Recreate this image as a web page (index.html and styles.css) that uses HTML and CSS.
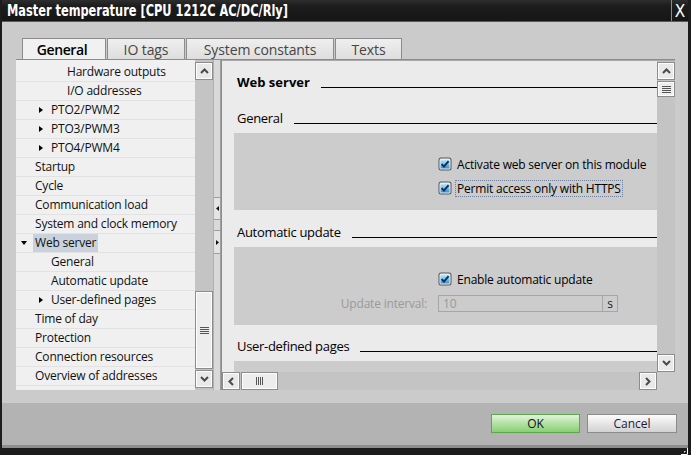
FILE: index.html
```html
<!DOCTYPE html>
<html>
<head>
<meta charset="utf-8">
<title>Master temperature</title>
<link rel="stylesheet" href="styles.css">
</head>
<body>
<div class="window">
  <div class="titlebar">
    <span class="title"><span class="title-text">Master temperature [CPU 1212C AC/DC/Rly]</span></span>
    <span class="close">X</span>
  </div>

  <div class="main">
    <div class="tabs">
      <div class="tab tab-general active">General</div>
      <div class="tab tab-io">IO tags</div>
      <div class="tab tab-sys">System constants</div>
      <div class="tab tab-texts">Texts</div>
    </div>

    <div class="frame">
      <div class="leftpane">
        <ul class="tree">
          <li class="node l3"><span class="tg"></span><span class="tx">Hardware outputs</span></li>
          <li class="node l3"><span class="tg"></span><span class="tx">I/O addresses</span></li>
          <li class="node l2"><span class="tg closed"></span><span class="tx">PTO2/PWM2</span></li>
          <li class="node l2"><span class="tg closed"></span><span class="tx">PTO3/PWM3</span></li>
          <li class="node l2"><span class="tg closed"></span><span class="tx">PTO4/PWM4</span></li>
          <li class="node l1"><span class="tg"></span><span class="tx">Startup</span></li>
          <li class="node l1"><span class="tg"></span><span class="tx">Cycle</span></li>
          <li class="node l1"><span class="tg"></span><span class="tx">Communication load</span></li>
          <li class="node l1"><span class="tg"></span><span class="tx">System and clock memory</span></li>
          <li class="node l1"><span class="tg open"></span><span class="tx selected">Web server</span></li>
          <li class="node l2"><span class="tg"></span><span class="tx">General</span></li>
          <li class="node l2"><span class="tg"></span><span class="tx">Automatic update</span></li>
          <li class="node l2"><span class="tg closed"></span><span class="tx">User-defined pages</span></li>
          <li class="node l1"><span class="tg"></span><span class="tx">Time of day</span></li>
          <li class="node l1"><span class="tg"></span><span class="tx">Protection</span></li>
          <li class="node l1"><span class="tg"></span><span class="tx">Connection resources</span></li>
          <li class="node l1"><span class="tg"></span><span class="tx">Overview of addresses</span></li>
        </ul>
        <div class="vscroll left-vscroll">
          <div class="sbtn"><svg width="9" height="6" viewBox="0 0 9 6"><polyline points="1,5 4.5,1.5 8,5" fill="none" stroke="#4a4a4a" stroke-width="2"/></svg></div>
          <div class="spacer"></div>
          <div class="sbtn thumb-left"><svg width="9" height="7" viewBox="0 0 9 7"><path d="M0 0.5H9M0 2.5H9M0 4.5H9M0 6.5H9" stroke="#555" stroke-width="1"/></svg></div>
          <div class="sbtn down-left"><svg width="9" height="6" viewBox="0 0 9 6"><polyline points="1,1 4.5,4.5 8,1" fill="none" stroke="#4a4a4a" stroke-width="2"/></svg></div>
        </div>
      </div>

      <div class="splitter">
        <div class="nub nub-left"><svg width="3" height="5" viewBox="0 0 3 5"><polygon points="3,0 0,2.5 3,5" fill="#111"/></svg></div>
        <div class="nub nub-right"><svg width="3" height="5" viewBox="0 0 3 5"><polygon points="0,0 3,2.5 0,5" fill="#111"/></svg></div>
      </div>

      <div class="rightpane">
        <div class="rp-top">
          <div class="rp-content">
            <div class="sec-head first"><span class="label bold">Web server</span><span class="rule"></span></div>

            <div class="sec-head gap16"><span class="label">General</span><span class="rule"></span></div>
            <div class="box box1">
              <div class="row">
                <svg class="cb" width="14" height="14" viewBox="0 0 14 14"><defs><linearGradient id="g1" x1="0" y1="0" x2="0" y2="1"><stop offset="0" stop-color="#c4ebfb"/><stop offset="1" stop-color="#2f93dc"/></linearGradient></defs><rect x="0.5" y="0.5" width="13" height="13" rx="2.5" fill="#545454"/><rect x="1.5" y="1.5" width="11" height="11" rx="1.5" fill="#f4f4f4"/><rect x="2.5" y="2.5" width="9" height="9" fill="url(#g1)"/><path d="M3.6 7.1 L6 9.6 L10.6 4.2" stroke="#11305c" stroke-width="2" fill="none"/></svg>
                <span class="clabel">Activate web server on this module</span>
              </div>
              <div class="row">
                <svg class="cb" width="14" height="14" viewBox="0 0 14 14"><defs><linearGradient id="g2" x1="0" y1="0" x2="0" y2="1"><stop offset="0" stop-color="#c4ebfb"/><stop offset="1" stop-color="#2f93dc"/></linearGradient></defs><rect x="0.5" y="0.5" width="13" height="13" rx="2.5" fill="#545454"/><rect x="1.5" y="1.5" width="11" height="11" rx="1.5" fill="#f4f4f4"/><rect x="2.5" y="2.5" width="9" height="9" fill="url(#g2)"/><path d="M3.6 7.1 L6 9.6 L10.6 4.2" stroke="#11305c" stroke-width="2" fill="none"/></svg>
                <span class="clabel focused">Permit access only with HTTPS</span>
              </div>
            </div>

            <div class="sec-head gap11"><span class="label">Automatic update</span><span class="rule"></span></div>
            <div class="box box2">
              <div class="row">
                <svg class="cb" width="14" height="14" viewBox="0 0 14 14"><defs><linearGradient id="g3" x1="0" y1="0" x2="0" y2="1"><stop offset="0" stop-color="#c4ebfb"/><stop offset="1" stop-color="#2f93dc"/></linearGradient></defs><rect x="0.5" y="0.5" width="13" height="13" rx="2.5" fill="#545454"/><rect x="1.5" y="1.5" width="11" height="11" rx="1.5" fill="#f4f4f4"/><rect x="2.5" y="2.5" width="9" height="9" fill="url(#g3)"/><path d="M3.6 7.1 L6 9.6 L10.6 4.2" stroke="#11305c" stroke-width="2" fill="none"/></svg>
                <span class="clabel">Enable automatic update</span>
              </div>
              <div class="flabel">Update interval:</div>
              <div class="row">
                <div class="input"><span class="val">10</span><span class="unit">s</span></div>
              </div>
            </div>

            <div class="sec-head gap10"><span class="label">User-defined pages</span><span class="rule"></span></div>
            <div class="box box3"></div>
          </div>
          <div class="vscroll right-vscroll">
            <div class="sbtn"><svg width="9" height="6" viewBox="0 0 9 6"><polyline points="1,5 4.5,1.5 8,5" fill="none" stroke="#4a4a4a" stroke-width="2"/></svg></div>
            <div class="sbtn thumb-right"><svg width="9" height="7" viewBox="0 0 9 7"><path d="M0 0.5H9M0 2.5H9M0 4.5H9M0 6.5H9" stroke="#555" stroke-width="1"/></svg></div>
            <div class="spacer"></div>
            <div class="sbtn"><svg width="9" height="6" viewBox="0 0 9 6"><polyline points="1,1 4.5,4.5 8,1" fill="none" stroke="#4a4a4a" stroke-width="2"/></svg></div>
          </div>
        </div>
        <div class="rp-bottom">
          <div class="hscroll">
            <div class="sbtn"><svg width="6" height="9" viewBox="0 0 6 9"><polyline points="5,1 1.5,4.5 5,8" fill="none" stroke="#4a4a4a" stroke-width="2"/></svg></div>
            <div class="sbtn hthumb"><svg width="7" height="8" viewBox="0 0 7 8"><path d="M0.5 0V8M2.5 0V8M4.5 0V8M6.5 0V8" stroke="#555" stroke-width="1"/></svg></div>
            <div class="spacer"></div>
            <div class="sbtn"><svg width="6" height="9" viewBox="0 0 6 9"><polyline points="1,1 4.5,4.5 1,8" fill="none" stroke="#4a4a4a" stroke-width="2"/></svg></div>
          </div>
          <div class="corner"></div>
        </div>
      </div>
    </div>
  </div>

  <div class="footer">
    <button class="btn ok">OK</button>
    <button class="btn cancel">Cancel</button>
  </div>
  <div class="edge">
    <svg class="grip" width="8" height="8" viewBox="0 0 8 8"><path d="M1 7.5H7.5V1" fill="none" stroke="#fff" stroke-width="1"/><path d="M4 5H5V4" fill="none" stroke="#fff" stroke-width="1"/></svg>
  </div>
</div>
</body>
</html>
```

FILE: styles.css
```css
* { box-sizing: border-box; }
html, body { margin: 0; padding: 0; }
body {
  width: 691px;
  height: 455px;
  overflow: hidden;
  background: #1c1c1c;
  font-family: "Open Sans", "Noto Sans", sans-serif;
  font-size: 12px;
  color: #000;
}

.window {
  position: relative;
  width: 691px;
  height: 455px;
  display: flex;
  flex-direction: column;
  background: #cbcbcb;
  border-left: 2px solid #1c1c1c;
  border-right: 3px solid #1c1c1c;
}

/* title bar */
.titlebar {
  height: 22px;
  flex: none;
  display: flex;
  align-items: stretch;
  background: linear-gradient(#2e2e2e, #1c1c1c 30%, #161616);
  border-bottom: 1px solid #5a5a5a;
  color: #fff;
}
.title {
  flex: 1;
  padding-left: 5px;
  display: flex;
  align-items: center;
  overflow: hidden;
}
.title-text {
  display: inline-block;
  white-space: nowrap;
  font-family: "DejaVu Sans Condensed", "DejaVu Sans", sans-serif;
  font-weight: bold;
  font-size: 16px;
  transform: scaleX(0.79);
  transform-origin: left center;
}
.close {
  width: 17px;
  border-left: 1px solid #8a8a8a;
  display: flex;
  align-items: center;
  justify-content: center;
  font-family: "DejaVu Sans Condensed", "DejaVu Sans", sans-serif;
  font-size: 17px;
}

/* main */
.main {
  height: 381px;
  flex: none;
  padding: 16px 13px 0 14px;
  display: flex;
  flex-direction: column;
}

.tabs {
  display: flex;
  gap: 1px;
  padding-left: 6px;
  height: 21px;
  flex: none;
}
.tab {
  height: 21px;
  border: 1px solid #8c8c8c;
  border-bottom: none;
  background: linear-gradient(#efefef, #dedede);
  color: #454545;
  font-size: 14px;
  display: flex;
  align-items: center;
  justify-content: center;
  letter-spacing: -0.1px;
}
.tab.active {
  background: #f1f1f1;
  color: #000;
  font-weight: 600;
  letter-spacing: -0.4px;
  padding-right: 4px;
}
.tab-general { width: 84px; }
.tab-io { width: 78px; }
.tab-sys { width: 148px; }
.tab-texts { width: 67px; }

.frame {
  height: 331px;
  flex: none;
  display: flex;
  border-top: 1px solid #8c8c8c;
}

/* left tree */
.leftpane {
  width: 197px;
  display: flex;
}
.tree {
  list-style: none;
  margin: 0;
  padding: 3px 0 0 0;
  width: 179px;
  background: #f0f0f0;
  overflow: hidden;
}
.node {
  height: 19px;
  border-bottom: 1px solid #e2e2e2;
  display: flex;
  align-items: center;
  letter-spacing: -0.2px;
  color: #111;
}
.node.l1 { padding-left: 3px; }
.node.l2 { padding-left: 19px; }
.node.l3 { padding-left: 35px; }
.tg {
  width: 16px;
  height: 18px;
  flex: none;
  display: flex;
  align-items: center;
}
.tg.closed::before {
  content: "";
  margin-left: 4px;
  border-left: 4px solid #000;
  border-top: 3.5px solid transparent;
  border-bottom: 3.5px solid transparent;
}
.tg.open::before {
  content: "";
  margin-left: 2px;
  border-top: 4px solid #000;
  border-left: 3.5px solid transparent;
  border-right: 3.5px solid transparent;
}
.tx {
  line-height: 18px;
  white-space: nowrap;
}
.tx.selected {
  background: #c9d1dc;
  margin-left: -2px;
  padding: 0 2px;
}

/* scrollbars */
.vscroll {
  width: 18px;
  flex: none;
  background: #c4c4c4;
  display: flex;
  flex-direction: column;
}
.left-vscroll { padding: 2px 0; }
.right-vscroll { padding-top: 1px; }
.spacer { flex: 1; }
.sbtn {
  width: 18px;
  height: 18px;
  flex: none;
  border: 1px solid #8c8c8c;
  background: #e9e9e9;
  box-shadow: inset 0 0 0 1px #fdfdfd;
  display: flex;
  align-items: center;
  justify-content: center;
}
.thumb-left { height: 78px; margin-bottom: 1px; background: #ededed; }
.thumb-right { height: 16px; margin-top: 1px; background: #ededed; }

.splitter {
  width: 8px;
  flex: none;
  background: #d9d9d9;
  border-left: 1px solid #b0b0b0;
  border-right: 1px solid #9e9e9e;
  display: flex;
  flex-direction: column;
  padding-top: 137px;
}
.nub {
  height: 23px;
  border-top: 1px solid #9e9e9e;
  border-bottom: 1px solid #9e9e9e;
  background: #e4e4e4;
  display: flex;
  align-items: center;
  justify-content: center;
}
.nub-right { margin-top: 10px; height: 24px; }

/* right pane */
.rightpane {
  width: 454px;
  flex: none;
  display: flex;
  flex-direction: column;
  border-left: 1px solid #8c8c8c;
  border-top: 1px solid #a8a8a8;
}
.rp-top {
  height: 311px;
  display: flex;
}
.rp-content {
  width: 435px;
  background: #ebebeb;
  overflow: hidden;
}
.rp-bottom {
  height: 18px;
  display: flex;
}
.hscroll {
  width: 435px;
  background: #c4c4c4;
  display: flex;
}
.hscroll .sbtn { height: 18px; }
.hthumb { width: 37px; margin-left: 1px; background: #ededed; }
.corner { width: 18px; background: #cbcbcb; }

.sec-head {
  display: flex;
  align-items: flex-start;
  height: 20px;
  padding-left: 15px;
}
.sec-head.first { margin-top: 10px; }
.sec-head.gap16 { margin-top: 16px; }
.sec-head.gap11 { margin-top: 11px; }
.sec-head.gap10 { margin-top: 10px; }
.label {
  font-size: 13px;
  line-height: 20px;
  padding-top: 1px;
  letter-spacing: -0.3px;
  white-space: nowrap;
}
.label.bold { font-weight: bold; letter-spacing: 0; }
.rule {
  flex: 1;
  height: 1px;
  margin: 16px 0 0 11px;
  background: #000;
}

.box {
  margin: 6px 0 0 12px;
  background: #cccccc;
  display: grid;
  grid-template-columns: 193px 1fr;
  column-gap: 11px;
  align-content: start;
}
.box1 { height: 77px; padding-top: 19px; }
.box2 { height: 78px; padding-top: 20px; }
.box3 { height: 40px; }
.row {
  grid-column: 2;
  height: 24px;
  display: flex;
  align-items: center;
  gap: 3px;
}
.cb { flex: none; }
.clabel {
  border: 1px dotted transparent;
  padding: 1px 1px 0;
  line-height: 14px;
  letter-spacing: -0.2px;
  white-space: nowrap;
}
.clabel.focused { border-color: #6f7f9f; }
.flabel {
  grid-column: 1;
  height: 24px;
  line-height: 25px;
  text-align: right;
  color: #9a9a9a;
  letter-spacing: -0.2px;
}
.input {
  width: 180px;
  height: 17px;
  border: 1px solid #a6a6a6;
  background: #cccccc;
  display: flex;
  align-items: stretch;
}
.val {
  flex: 1;
  padding-left: 4px;
  color: #9a9a9a;
  line-height: 16px;
}
.unit {
  width: 15px;
  border-left: 1px solid #a6a6a6;
  text-align: center;
  color: #222;
  line-height: 16px;
}

/* footer */
.footer {
  height: 42px;
  flex: none;
  background: #b3b3b3;
  display: flex;
  justify-content: flex-end;
  align-items: flex-start;
  gap: 7px;
  padding: 11px 11px 0 0;
}
.btn {
  height: 19px;
  padding: 0;
  font-family: "Open Sans", "Noto Sans", sans-serif;
  font-size: 12px;
  line-height: 17px;
}
.btn.ok {
  width: 89px;
  border: 1px solid #5aa94a;
  background: linear-gradient(#e2f5dc, #b6e4a8 45%, #88cf76);
  color: #111;
}
.btn.cancel {
  width: 90px;
  border: 1px solid #8c8c8c;
  background: linear-gradient(#fbfbfb, #e8e8e8 45%, #d2d2d2);
  color: #1a1a40;
}

.edge {
  height: 10px;
  flex: none;
  background: #1c1c1c;
  border-top: 3px solid #8e8e8e;
}
.grip {
  position: absolute;
  right: 0;
  bottom: 0;
}
```
